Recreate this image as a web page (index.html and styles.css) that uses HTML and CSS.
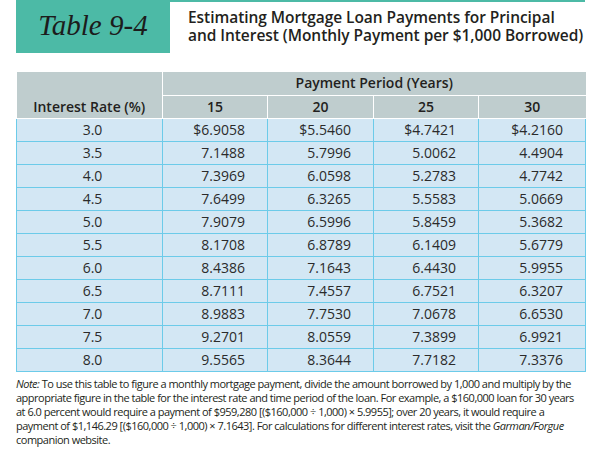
FILE: index.html
```html
<!DOCTYPE html>
<html>
<head>
<meta charset="utf-8">
<link rel="stylesheet" href="styles.css">
</head>
<body>
<div class="page">
  <div class="header">
    <div class="badge">Table 9-4</div>
    <div class="title-area">
      <h1 class="title"><span class="tline">Estimating Mortgage Loan Payments for Principal</span><span class="tline">and Interest (Monthly Payment per $1,000 Borrowed)</span></h1>
    </div>
  </div>
  <table class="rates">
    <colgroup>
      <col class="c-rate"><col class="c-15"><col class="c-20"><col class="c-25"><col class="c-30">
    </colgroup>
    <thead>
      <tr><th rowspan="2" class="rate-head">Interest Rate (%)</th><th colspan="4" class="period">Payment Period (Years)</th></tr>
      <tr><th>15</th><th>20</th><th>25</th><th>30</th></tr>
    </thead>
    <tbody>
      <tr><td class="rate">3.0</td><td>$6.9058</td><td>$5.5460</td><td>$4.7421</td><td>$4.2160</td></tr>
      <tr><td class="rate">3.5</td><td>7.1488</td><td>5.7996</td><td>5.0062</td><td>4.4904</td></tr>
      <tr><td class="rate">4.0</td><td>7.3969</td><td>6.0598</td><td>5.2783</td><td>4.7742</td></tr>
      <tr><td class="rate">4.5</td><td>7.6499</td><td>6.3265</td><td>5.5583</td><td>5.0669</td></tr>
      <tr><td class="rate">5.0</td><td>7.9079</td><td>6.5996</td><td>5.8459</td><td>5.3682</td></tr>
      <tr><td class="rate">5.5</td><td>8.1708</td><td>6.8789</td><td>6.1409</td><td>5.6779</td></tr>
      <tr><td class="rate">6.0</td><td>8.4386</td><td>7.1643</td><td>6.4430</td><td>5.9955</td></tr>
      <tr><td class="rate">6.5</td><td>8.7111</td><td>7.4557</td><td>6.7521</td><td>6.3207</td></tr>
      <tr><td class="rate">7.0</td><td>8.9883</td><td>7.7530</td><td>7.0678</td><td>6.6530</td></tr>
      <tr><td class="rate">7.5</td><td>9.2701</td><td>8.0559</td><td>7.3899</td><td>6.9921</td></tr>
      <tr><td class="rate">8.0</td><td>9.5565</td><td>8.3644</td><td>7.7182</td><td>7.3376</td></tr>
    </tbody>
  </table>
  <p class="note"><em>Note:</em> To use this table to figure a monthly mortgage payment, divide the amount borrowed by 1,000 and multiply by the<br>appropriate figure in the table for the interest rate and time period of the loan. For example, a $160,000 loan for 30 years<br>at 6.0 percent would require a payment of $959,280 [($160,000 ÷ 1,000) × 5.9955]; over 20 years, it would require a<br>payment of $1,146.29 [($160,000 ÷ 1,000) × 7.1643]. For calculations for different interest rates, visit the <em>Garman/Forgue</em><br>companion website.</p>
</div>
</body>
</html>
```
FILE: styles.css
```css
* { box-sizing: border-box; }
html, body { margin: 0; padding: 0; background: #ffffff; }
body {
  font-family: "Open Sans", "Noto Sans", sans-serif;
  color: #231f20;
  width: 604px;
  height: 450px;
  overflow: hidden;
}
.page {
  padding-left: 16px;
  width: 585px;
}
.header {
  display: flex;
  height: 53px;
}
.badge {
  width: 154px;
  height: 53px;
  background: #4cbaa6;
  color: #1c1c1c;
  font-family: "Liberation Serif", serif;
  font-style: italic;
  font-size: 29px;
  display: flex;
  align-items: center;
  justify-content: center;
  padding-bottom: 2px;
}
.title-area {
  flex: 1;
  border-top: 2px solid #4cbaa6;
  padding-left: 18px;
  padding-top: 6px;
}
.title {
  margin: 0;
  font-size: 15.5px;
  font-weight: 600;
  letter-spacing: -0.05px;
  color: #231f20;
  display: flex;
  flex-direction: column;
}
.tline {
  display: block;
  height: 17.5px;
  line-height: 18px;
  white-space: nowrap;
}
.rates {
  margin-top: 19px;
  border-collapse: collapse;
  table-layout: fixed;
  width: 569px;
  font-size: 14px;
}
.c-rate { width: 146px; }
.c-15 { width: 105px; }
.c-20 { width: 106px; }
.c-25 { width: 105px; }
.c-30 { width: 107px; }
.rates th {
  background: #bfcdce;
  border: 1px solid #ffffff;
  height: 23px;
  padding: 0;
  font-weight: 600;
  font-size: 14px;
  text-align: center;
  line-height: 20px;
}
.rates thead tr:first-child th { border-top: none; }
.rates th.rate-head { border-left: none; vertical-align: bottom; padding-bottom: 1px; }
.rates th:last-child { border-right: none; }
.rates td {
  background: #d3e7f4;
  border: 1px solid #6ccbe9;
  height: 23px;
  padding: 0 22px 0 0;
  text-align: right;
  line-height: 20px;
  color: #2b2b2b;
}
.rates td.rate { text-align: center; padding: 0 0 0 6px; }
.note {
  margin: 5px 0 0 0;
  font-size: 11px;
  line-height: 14px;
  letter-spacing: -0.5px;
  white-space: nowrap;
  color: #231f20;
}
```
